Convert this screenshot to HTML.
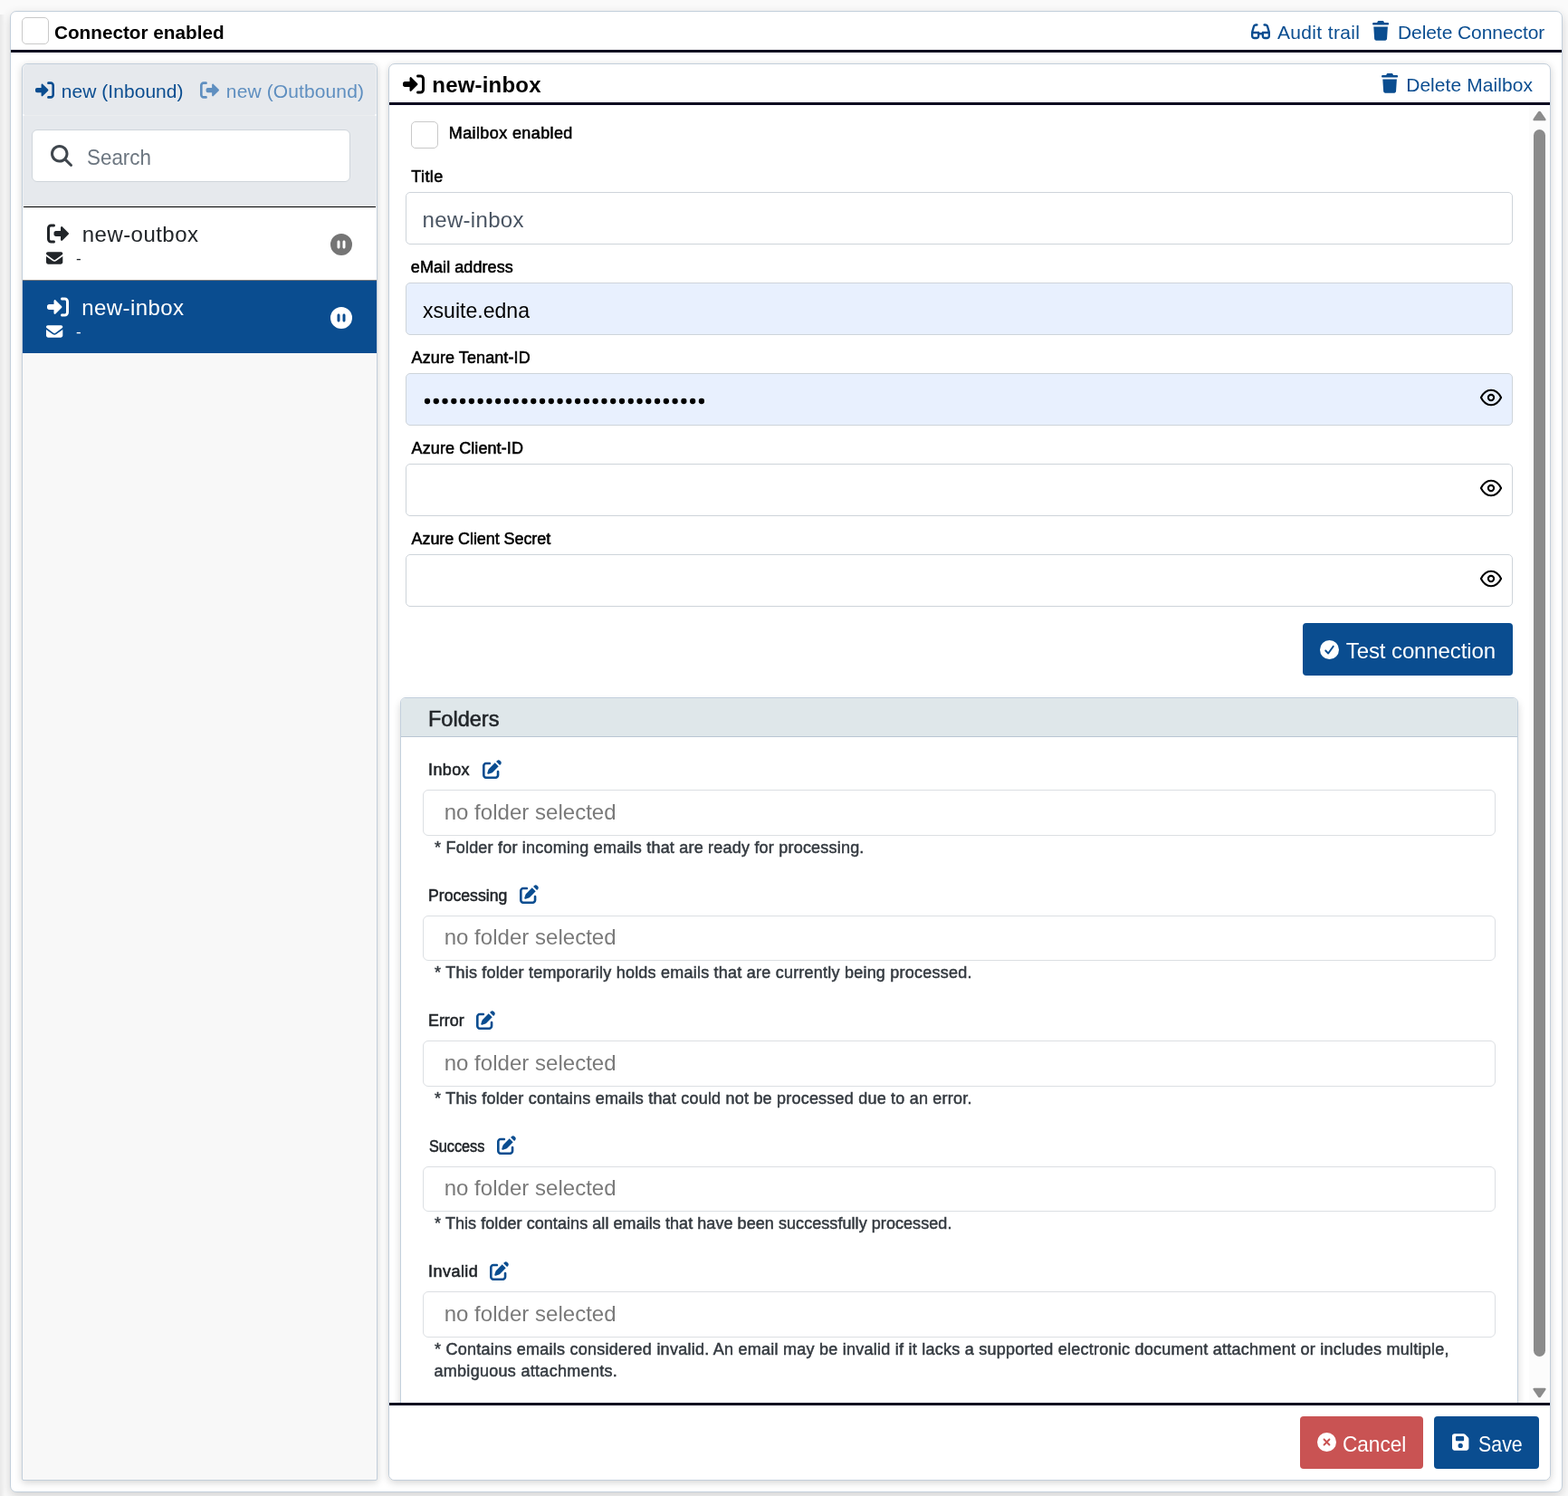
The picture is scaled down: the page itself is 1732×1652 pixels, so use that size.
<!DOCTYPE html>
<html lang="en"><head><meta charset="utf-8"><title>Connector</title>
<meta name="viewport" content="width=1732">
<style>
html,body{margin:0;padding:0}
body{width:1732px;height:1652px;overflow:hidden;background:#fafafa;position:relative;
 font-family:"Liberation Sans",Arial,sans-serif;-webkit-font-smoothing:antialiased}
#app{position:absolute;left:0;top:0;width:1732px;height:1652px;will-change:transform}
.b{position:absolute}
.i{position:absolute;display:block;overflow:visible}
.t{position:absolute;white-space:nowrap;display:block}
</style></head>
<body>
<div id="app">
<div class="b" style="left:0px;top:16px;width:6px;height:1636px;background:linear-gradient(to right, rgba(0,0,0,.07), rgba(0,0,0,0))"></div>
<div class="b" style="left:11px;top:12px;width:1715px;height:1636px;background:#fff;border:1px solid #c3cfdb;border-radius:7px;box-shadow:0 4px 12px rgba(0,0,0,.16);box-sizing:border-box"></div>
<div class="b" style="left:24px;top:19px;width:30px;height:30px;background:#fff;border:1px solid #c9c9c9;border-radius:5px;box-sizing:border-box"></div>
<span class="t" id="h_conn" style="left:59.70px;top:25px;font-size:21px;line-height:21px;color:#000;font-weight:bold;letter-spacing:0.000px;transform:scaleX(0.9861);transform-origin:0 50%;">Connector enabled</span>
<svg class="i" style="left:1382.1px;top:24.7px;" width="21" height="19.5" viewBox="0 0 576 512" preserveAspectRatio="none"><path fill="#0a4d90" d="M143.3 96c-14 0-26.5 9.2-30.6 22.6L70.4 256H224c17.7 0 32 14.3 32 32h64c0-17.7 14.3-32 32-32h153.6l-42.3-137.4c-4.1-13.4-16.5-22.6-30.6-22.6H400c-17.7 0-32-14.3-32-32s14.3-32 32-32h32.7c42.1 0 79.4 27.5 91.8 67.8l45.4 147.5c4.1 13.2 6.1 26.9 6.1 40.7v96c0 53-43 96-96 96h-64c-53 0-96-43-96-96v-32h-64v32c0 53-43 96-96 96H96c-53 0-96-43-96-96v-96c0-13.8 2.1-27.5 6.1-40.7L51.5 99.8C63.9 59.5 101.1 32 143.3 32H176c17.7 0 32 14.3 32 32s-14.3 32-32 32zM64 320v64c0 17.7 14.3 32 32 32h64c17.7 0 32-14.3 32-32v-64zm416 96c17.7 0 32-14.3 32-32v-64H384v64c0 17.7 14.3 32 32 32z"/></svg>
<span class="t" id="h_audit" style="left:1410.90px;top:25px;font-size:21px;line-height:21px;color:#0a4d90;font-weight:normal;letter-spacing:0.360px;">Audit trail</span>
<svg class="i" style="left:1516.0px;top:23.2px;" width="18.2" height="21.7" viewBox="0 -16 448 528" preserveAspectRatio="none"><path fill="#0a4d90" d="M136.7 5.9 128 32H32C14.3 32 0 46.3 0 64s14.3 32 32 32h384c17.7 0 32-14.3 32-32s-14.3-32-32-32h-96l-8.7-26.1C306.9-7.2 294.7-16 280.9-16H167.1c-13.8 0-26 8.8-30.4 21.9M416 144H32l21.1 323.1C54.7 492.4 75.7 512 101 512h246c25.3 0 46.3-19.6 47.9-44.9z"/></svg>
<span class="t" id="h_delc" style="left:1543.95px;top:25px;font-size:21px;line-height:21px;color:#0a4d90;font-weight:normal;letter-spacing:-0.067px;">Delete Connector</span>
<div class="b" style="left:12px;top:55px;width:1713px;height:3px;background:#08061f"></div>
<div class="b" style="left:24px;top:70px;width:393px;height:1565px;background:#f8f8f8;border:1px solid #c3cfdb;border-radius:6px 6px 2px 2px;box-shadow:0 2px 8px rgba(0,0,0,.18);box-sizing:border-box"></div>
<div class="b" style="left:25px;top:71px;width:391px;height:157px;background:#eef0f2;border-radius:6px 6px 0 0"></div>
<div class="b" style="left:26px;top:71px;width:389px;height:157px;background:#e6e9ed;border-radius:5px 5px 0 0"></div>
<div class="b" style="left:25px;top:127px;width:391px;height:1px;background:#ecedef"></div>
<div class="b" style="left:25px;top:126px;width:2px;height:2px;background:#fff;border-radius:0 2px 2px 0;opacity:.8"></div>
<div class="b" style="left:414px;top:126px;width:2px;height:2px;background:#fff;border-radius:2px 0 0 2px;opacity:.8"></div>
<svg class="i" style="left:39.1px;top:89px;" width="21" height="21" viewBox="0 0 512 512" preserveAspectRatio="none"><path fill="#0a4d90" d="M345 273c9.4-9.4 9.4-24.6 0-33.9L201 95c-6.9-6.9-17.2-8.9-26.2-5.2S160 102.3 160 112v80H48c-26.5 0-48 21.5-48 48v32c0 26.5 21.5 48 48 48h112v80c0 9.7 5.8 18.5 14.8 22.2s19.3 1.7 26.2-5.2zm7 143c-17.7 0-32 14.3-32 32s14.3 32 32 32h64c53 0 96-43 96-96V128c0-53-43-96-96-96h-64c-17.7 0-32 14.3-32 32s14.3 32 32 32h64c17.7 0 32 14.3 32 32v256c0 17.7-14.3 32-32 32z"/></svg>
<span class="t" id="tab_in" style="left:67.75px;top:90px;font-size:21px;line-height:21px;color:#0a4d90;font-weight:normal;letter-spacing:0.046px;">new (Inbound)</span>
<svg class="i" style="left:221px;top:89px;" width="21" height="21" viewBox="0 0 512 512" preserveAspectRatio="none"><path fill="#5f8fc0" d="M505 273c9.4-9.4 9.4-24.6 0-33.9L361 95c-6.9-6.9-17.2-8.9-26.2-5.2S320 102.3 320 112v80H208c-26.5 0-48 21.5-48 48v32c0 26.5 21.5 48 48 48h112v80c0 9.7 5.8 18.5 14.8 22.2s19.3 1.7 26.2-5.2zM160 96c17.7 0 32-14.3 32-32s-14.3-32-32-32H96C43 32 0 75 0 128v256c0 53 43 96 96 96h64c17.7 0 32-14.3 32-32s-14.3-32-32-32H96c-17.7 0-32-14.3-32-32V128c0-17.7 14.3-32 32-32z"/></svg>
<span class="t" id="tab_out" style="left:249.85px;top:90px;font-size:21px;line-height:21px;color:#5f8fc0;font-weight:normal;letter-spacing:0.115px;">new (Outbound)</span>
<div class="b" style="left:35px;top:143px;width:352px;height:58px;background:#fff;border:1px solid #cfd5db;border-radius:6px;box-sizing:border-box"></div>
<svg class="i" style="left:56px;top:160px;" width="24" height="24" viewBox="0 0 512 512" preserveAspectRatio="none"><path fill="#3f464d" d="M416 208c0 45.9-14.9 88.3-40 122.7l126.6 126.7c12.5 12.5 12.5 32.8 0 45.3s-32.8 12.5-45.3 0L330.7 376c-34.4 25.1-76.8 40-122.7 40C93.1 416 0 322.9 0 208S93.1 0 208 0s208 93.1 208 208M208 352a144 144 0 1 0 0-288 144 144 0 1 0 0 288"/></svg>
<span class="t" id="search" style="left:95.80px;top:162px;font-size:24px;line-height:24px;color:#6c7680;font-weight:normal;letter-spacing:0.000px;transform:scaleX(0.9337);transform-origin:0 50%;">Search</span>
<div class="b" style="left:26px;top:228px;width:389px;height:1px;background:#000"></div>
<div class="b" style="left:25px;top:229px;width:391px;height:80px;background:#fff"></div>
<svg class="i" style="left:52px;top:245.75px;" width="24" height="24" viewBox="0 0 512 512" preserveAspectRatio="none"><path fill="#212529" d="M505 273c9.4-9.4 9.4-24.6 0-33.9L361 95c-6.9-6.9-17.2-8.9-26.2-5.2S320 102.3 320 112v80H208c-26.5 0-48 21.5-48 48v32c0 26.5 21.5 48 48 48h112v80c0 9.7 5.8 18.5 14.8 22.2s19.3 1.7 26.2-5.2zM160 96c17.7 0 32-14.3 32-32s-14.3-32-32-32H96C43 32 0 75 0 128v256c0 53 43 96 96 96h64c17.7 0 32-14.3 32-32s-14.3-32-32-32H96c-17.7 0-32-14.3-32-32V128c0-17.7 14.3-32 32-32z"/></svg>
<span class="t" id="it1" style="left:90.80px;top:247px;font-size:24px;line-height:24px;color:#212529;font-weight:normal;letter-spacing:0.450px;">new-outbox</span>
<svg class="i" style="left:51.2px;top:276.1px;" width="18.3" height="18" viewBox="0 0 512 512" preserveAspectRatio="none"><path fill="#212529" d="M48 64C21.5 64 0 85.5 0 112c0 15.1 7.1 29.3 19.2 38.4l208 156a48 48 0 0 0 57.6 0l208-156c12.1-9.1 19.2-23.3 19.2-38.4 0-26.5-21.5-48-48-48zM0 196v188c0 35.3 28.7 64 64 64h384c35.3 0 64-28.7 64-64V196L313.6 344.8c-34.1 25.6-81.1 25.6-115.2 0z"/></svg>
<span class="t" id="it1d" style="left:83.95px;top:277px;font-size:17px;line-height:17px;color:#212529;font-weight:normal;letter-spacing:0.000px;">-</span>
<svg class="i" style="left:365px;top:258px;" width="24" height="24" viewBox="0 0 512 512" preserveAspectRatio="none"><path fill="#757575" d="M256 512a256 256 0 1 0 0-512 256 256 0 1 0 0 512m-32-320v128c0 17.7-14.3 32-32 32s-32-14.3-32-32V192c0-17.7 14.3-32 32-32s32 14.3 32 32m128 0v128c0 17.7-14.3 32-32 32s-32-14.3-32-32V192c0-17.7 14.3-32 32-32s32 14.3 32 32"/></svg>
<div class="b" style="left:25px;top:309px;width:391px;height:81px;background:#0a4d90"></div>
<div class="b" style="left:25px;top:309px;width:391px;height:1px;background:#77787a"></div>
<svg class="i" style="left:52px;top:326.85px;" width="24" height="24" viewBox="0 0 512 512" preserveAspectRatio="none"><path fill="#fff" d="M345 273c9.4-9.4 9.4-24.6 0-33.9L201 95c-6.9-6.9-17.2-8.9-26.2-5.2S160 102.3 160 112v80H48c-26.5 0-48 21.5-48 48v32c0 26.5 21.5 48 48 48h112v80c0 9.7 5.8 18.5 14.8 22.2s19.3 1.7 26.2-5.2zm7 143c-17.7 0-32 14.3-32 32s14.3 32 32 32h64c53 0 96-43 96-96V128c0-53-43-96-96-96h-64c-17.7 0-32 14.3-32 32s14.3 32 32 32h64c17.7 0 32 14.3 32 32v256c0 17.7-14.3 32-32 32z"/></svg>
<span class="t" id="it2" style="left:90.30px;top:328px;font-size:24px;line-height:24px;color:#fff;font-weight:normal;letter-spacing:0.425px;">new-inbox</span>
<svg class="i" style="left:51.2px;top:357.2px;" width="18.3" height="18" viewBox="0 0 512 512" preserveAspectRatio="none"><path fill="#fff" d="M48 64C21.5 64 0 85.5 0 112c0 15.1 7.1 29.3 19.2 38.4l208 156a48 48 0 0 0 57.6 0l208-156c12.1-9.1 19.2-23.3 19.2-38.4 0-26.5-21.5-48-48-48zM0 196v188c0 35.3 28.7 64 64 64h384c35.3 0 64-28.7 64-64V196L313.6 344.8c-34.1 25.6-81.1 25.6-115.2 0z"/></svg>
<span class="t" id="it2d" style="left:83.95px;top:358px;font-size:17px;line-height:17px;color:#fff;font-weight:normal;letter-spacing:0.000px;">-</span>
<svg class="i" style="left:365px;top:338.8px;" width="24" height="24" viewBox="0 0 512 512" preserveAspectRatio="none"><path fill="#fff" d="M256 512a256 256 0 1 0 0-512 256 256 0 1 0 0 512m-32-320v128c0 17.7-14.3 32-32 32s-32-14.3-32-32V192c0-17.7 14.3-32 32-32s32 14.3 32 32m128 0v128c0 17.7-14.3 32-32 32s-32-14.3-32-32V192c0-17.7 14.3-32 32-32s32 14.3 32 32"/></svg>
<div class="b" style="left:429px;top:70px;width:1284px;height:1565px;background:#fff;border:1px solid #c3cfdb;border-radius:7px;box-shadow:0 2px 8px rgba(0,0,0,.18);box-sizing:border-box"></div>
<svg class="i" style="left:445px;top:81px;" width="24" height="24" viewBox="0 0 512 512" preserveAspectRatio="none"><path fill="#000" d="M345 273c9.4-9.4 9.4-24.6 0-33.9L201 95c-6.9-6.9-17.2-8.9-26.2-5.2S160 102.3 160 112v80H48c-26.5 0-48 21.5-48 48v32c0 26.5 21.5 48 48 48h112v80c0 9.7 5.8 18.5 14.8 22.2s19.3 1.7 26.2-5.2zm7 143c-17.7 0-32 14.3-32 32s14.3 32 32 32h64c53 0 96-43 96-96V128c0-53-43-96-96-96h-64c-17.7 0-32 14.3-32 32s14.3 32 32 32h64c17.7 0 32 14.3 32 32v256c0 17.7-14.3 32-32 32z"/></svg>
<span class="t" id="rh" style="left:477.35px;top:82px;font-size:24px;line-height:24px;color:#000;font-weight:bold;letter-spacing:0.188px;">new-inbox</span>
<svg class="i" style="left:1525.9px;top:81.1px;" width="18.2" height="21.7" viewBox="0 -16 448 528" preserveAspectRatio="none"><path fill="#0a4d90" d="M136.7 5.9 128 32H32C14.3 32 0 46.3 0 64s14.3 32 32 32h384c17.7 0 32-14.3 32-32s-14.3-32-32-32h-96l-8.7-26.1C306.9-7.2 294.7-16 280.9-16H167.1c-13.8 0-26 8.8-30.4 21.9M416 144H32l21.1 323.1C54.7 492.4 75.7 512 101 512h246c25.3 0 46.3-19.6 47.9-44.9z"/></svg>
<span class="t" id="rh_del" style="left:1553.15px;top:83px;font-size:21px;line-height:21px;color:#0a4d90;font-weight:normal;letter-spacing:0.069px;">Delete Mailbox</span>
<div class="b" style="left:430px;top:113px;width:1282px;height:3px;background:#08061f"></div>
<div class="b" style="left:1689px;top:116px;width:23px;height:1433px;background:#fcfcfc"></div>
<svg class="i" style="left:1693px;top:122px" width="15" height="12" viewBox="0 0 15 12"><path d="M7.5 0.7 Q8.4 0.7 9 1.6 L14.3 9.2 Q15.2 11.2 13.2 11.3 L1.8 11.3 Q-0.2 11.2 0.7 9.2 L6 1.6 Q6.6 0.7 7.5 0.7 Z" fill="#8b8b8b"/></svg>
<div class="b" style="left:1694px;top:143px;width:13px;height:1355px;background:#8b8b8b;border-radius:7px"></div>
<svg class="i" style="left:1693px;top:1532px" width="15" height="12" viewBox="0 0 15 12"><path d="M7.5 11.3 Q8.4 11.3 9 10.4 L14.3 2.8 Q15.2 0.8 13.2 0.7 L1.8 0.7 Q-0.2 0.8 0.7 2.8 L6 10.4 Q6.6 11.3 7.5 11.3 Z" fill="#8b8b8b"/></svg>
<div class="b" style="left:454px;top:134px;width:30px;height:30px;background:#fff;border:1px solid #c9c9c9;border-radius:5px;box-sizing:border-box"></div>
<span class="t" id="mb_en" style="left:495.75px;top:138px;font-size:18px;line-height:18px;color:#000;font-weight:normal;letter-spacing:0.393px;-webkit-text-stroke:0.55px currentColor">Mailbox enabled</span>
<span class="t" id="lab0" style="left:454.30px;top:186px;font-size:18px;line-height:18px;color:#000;font-weight:normal;letter-spacing:0.387px;-webkit-text-stroke:0.55px currentColor">Title</span>
<div class="b" style="left:448px;top:212px;width:1223px;height:58px;background:#fff;border:1px solid #ced4da;border-radius:5px;box-sizing:border-box"></div>
<span class="t" id="lab1" style="left:453.85px;top:286px;font-size:18px;line-height:18px;color:#000;font-weight:normal;letter-spacing:0.071px;-webkit-text-stroke:0.55px currentColor">eMail address</span>
<div class="b" style="left:448px;top:312px;width:1223px;height:58px;background:#e8f0fe;border:1px solid #ced4da;border-radius:5px;box-sizing:border-box"></div>
<span class="t" id="lab2" style="left:454.60px;top:386px;font-size:18px;line-height:18px;color:#000;font-weight:normal;letter-spacing:0.093px;-webkit-text-stroke:0.55px currentColor">Azure Tenant-ID</span>
<div class="b" style="left:448px;top:412px;width:1223px;height:58px;background:#e8f0fe;border:1px solid #ced4da;border-radius:5px;box-sizing:border-box"></div>
<svg class="i" style="left:1634.05px;top:428.9px" width="26" height="20" viewBox="0 0 26 20"><path d="M1.9 10 C4.6 4.6 8.4 1.8 13 1.8 S21.4 4.6 24.1 10 C21.4 15.4 17.6 18.2 13 18.2 S4.6 15.4 1.9 10 Z" fill="none" stroke="#000" stroke-width="2.05" stroke-linejoin="round"/><circle cx="13" cy="10" r="3.15" fill="none" stroke="#000" stroke-width="2.05"/></svg>
<span class="t" id="lab3" style="left:454.60px;top:486px;font-size:18px;line-height:18px;color:#000;font-weight:normal;letter-spacing:0.089px;-webkit-text-stroke:0.55px currentColor">Azure Client-ID</span>
<div class="b" style="left:448px;top:512px;width:1223px;height:58px;background:#fff;border:1px solid #ced4da;border-radius:5px;box-sizing:border-box"></div>
<svg class="i" style="left:1634.05px;top:528.9px" width="26" height="20" viewBox="0 0 26 20"><path d="M1.9 10 C4.6 4.6 8.4 1.8 13 1.8 S21.4 4.6 24.1 10 C21.4 15.4 17.6 18.2 13 18.2 S4.6 15.4 1.9 10 Z" fill="none" stroke="#000" stroke-width="2.05" stroke-linejoin="round"/><circle cx="13" cy="10" r="3.15" fill="none" stroke="#000" stroke-width="2.05"/></svg>
<span class="t" id="lab4" style="left:454.60px;top:586px;font-size:18px;line-height:18px;color:#000;font-weight:normal;letter-spacing:-0.083px;-webkit-text-stroke:0.55px currentColor">Azure Client Secret</span>
<div class="b" style="left:448px;top:612px;width:1223px;height:58px;background:#fff;border:1px solid #ced4da;border-radius:5px;box-sizing:border-box"></div>
<svg class="i" style="left:1634.05px;top:628.9px" width="26" height="20" viewBox="0 0 26 20"><path d="M1.9 10 C4.6 4.6 8.4 1.8 13 1.8 S21.4 4.6 24.1 10 C21.4 15.4 17.6 18.2 13 18.2 S4.6 15.4 1.9 10 Z" fill="none" stroke="#000" stroke-width="2.05" stroke-linejoin="round"/><circle cx="13" cy="10" r="3.15" fill="none" stroke="#000" stroke-width="2.05"/></svg>
<span class="t" id="v_title" style="left:466.60px;top:231px;font-size:24px;line-height:24px;color:#4a5563;font-weight:normal;letter-spacing:0.312px;">new-inbox</span>
<span class="t" id="v_mail" style="left:467.05px;top:331px;font-size:24px;line-height:24px;color:#000;font-weight:normal;letter-spacing:0.000px;transform:scaleX(0.9612);transform-origin:0 50%;">xsuite.edna</span>
<svg class="i" style="left:467.8px;top:438.75px" width="320" height="8" viewBox="0 0 320 8" fill="#000"><circle cx="4.00" cy="4" r="3.15"/><circle cx="13.77" cy="4" r="3.15"/><circle cx="23.54" cy="4" r="3.15"/><circle cx="33.32" cy="4" r="3.15"/><circle cx="43.09" cy="4" r="3.15"/><circle cx="52.86" cy="4" r="3.15"/><circle cx="62.63" cy="4" r="3.15"/><circle cx="72.40" cy="4" r="3.15"/><circle cx="82.18" cy="4" r="3.15"/><circle cx="91.95" cy="4" r="3.15"/><circle cx="101.72" cy="4" r="3.15"/><circle cx="111.49" cy="4" r="3.15"/><circle cx="121.26" cy="4" r="3.15"/><circle cx="131.04" cy="4" r="3.15"/><circle cx="140.81" cy="4" r="3.15"/><circle cx="150.58" cy="4" r="3.15"/><circle cx="160.35" cy="4" r="3.15"/><circle cx="170.12" cy="4" r="3.15"/><circle cx="179.90" cy="4" r="3.15"/><circle cx="189.67" cy="4" r="3.15"/><circle cx="199.44" cy="4" r="3.15"/><circle cx="209.21" cy="4" r="3.15"/><circle cx="218.98" cy="4" r="3.15"/><circle cx="228.76" cy="4" r="3.15"/><circle cx="238.53" cy="4" r="3.15"/><circle cx="248.30" cy="4" r="3.15"/><circle cx="258.07" cy="4" r="3.15"/><circle cx="267.84" cy="4" r="3.15"/><circle cx="277.62" cy="4" r="3.15"/><circle cx="287.39" cy="4" r="3.15"/><circle cx="297.16" cy="4" r="3.15"/><circle cx="306.93" cy="4" r="3.15"/></svg>
<div class="b" style="left:1439px;top:688px;width:232px;height:58px;background:#0a4d90;border-radius:4px"></div>
<svg class="i" style="left:1458px;top:707px;" width="21" height="21" viewBox="0 0 512 512" preserveAspectRatio="none"><path fill="#fff" d="M256 512a256 256 0 1 1 0-512 256 256 0 1 1 0 512m118-366.3c-10.7-7.8-25.7-5.4-33.5 5.3L221.1 315.2 169 263.1c-9.4-9.4-24.6-9.4-33.9 0s-9.4 24.6 0 33.9l72 72c5 5 11.8 7.5 18.8 7s13.4-4.1 17.5-9.8l135.9-187c7.8-10.7 5.4-25.7-5.3-33.5"/></svg>
<span class="t" id="btn_test" style="left:1486.85px;top:707px;font-size:24px;line-height:24px;color:#fff;font-weight:normal;letter-spacing:-0.108px;">Test connection</span>
<div class="b" style="left:442px;top:770px;width:1235px;height:790px;background:#fff;border:1px solid #c3d0dd;border-radius:6px 6px 0 0;box-shadow:0 5px 8px rgba(0,0,0,.16);box-sizing:border-box"></div>
<div class="b" style="left:443px;top:771px;width:1233px;height:42px;background:#dfe7ea;border-radius:5px 5px 0 0;border-bottom:1px solid #b9c6d3"></div>
<span class="t" id="folders" style="left:473.25px;top:782px;font-size:24px;line-height:24px;color:#212529;font-weight:normal;letter-spacing:0.000px;transform:scaleX(0.9800);transform-origin:0 50%;-webkit-text-stroke:0.55px currentColor">Folders</span>
<span class="t" id="fl0" style="left:473.05px;top:841px;font-size:18px;line-height:18px;color:#212529;font-weight:normal;letter-spacing:0.375px;-webkit-text-stroke:0.55px currentColor">Inbox</span>
<svg class="i" style="left:533px;top:839px;" width="21" height="21" viewBox="0 0 512 512" preserveAspectRatio="none"><path fill="#0a4d90" d="M471.6 21.7c-21.9-21.9-57.3-21.9-79.2 0L368 46.1l97.9 97.9 24.4-24.4c21.9-21.9 21.9-57.3 0-79.2zm-299.2 220c-6.1 6.1-10.8 13.6-13.5 21.9l-29.6 88.8c-2.9 8.6-.6 18.1 5.8 24.6s15.9 8.7 24.6 5.8l88.8-29.6c8.2-2.7 15.7-7.4 21.9-13.5L432 177.9 334.1 80zM96 64c-53 0-96 43-96 96v256c0 53 43 96 96 96h256c53 0 96-43 96-96v-96c0-17.7-14.3-32-32-32s-32 14.3-32 32v96c0 17.7-14.3 32-32 32H96c-17.7 0-32-14.3-32-32V160c0-17.7 14.3-32 32-32h96c17.7 0 32-14.3 32-32s-14.3-32-32-32z"/></svg>
<div class="b" style="left:467px;top:872px;width:1185px;height:51px;background:#fff;border:1px solid #dcdfe3;border-radius:6px;box-sizing:border-box"></div>
<span class="t" id="fv0" style="left:490.65px;top:885px;font-size:24px;line-height:24px;color:#7a7a7a;font-weight:normal;letter-spacing:0.029px;">no folder selected</span>
<span class="t" id="fh0" style="left:480.10px;top:927px;font-size:18px;line-height:18px;color:#343a40;font-weight:normal;letter-spacing:0.208px;-webkit-text-stroke:0.5px currentColor">* Folder for incoming emails that are ready for processing.</span>
<span class="t" id="fl1" style="left:473.30px;top:980px;font-size:18px;line-height:18px;color:#212529;font-weight:normal;letter-spacing:0.000px;transform:scaleX(0.9800);transform-origin:0 50%;-webkit-text-stroke:0.55px currentColor">Processing</span>
<svg class="i" style="left:574px;top:977px;" width="21" height="21" viewBox="0 0 512 512" preserveAspectRatio="none"><path fill="#0a4d90" d="M471.6 21.7c-21.9-21.9-57.3-21.9-79.2 0L368 46.1l97.9 97.9 24.4-24.4c21.9-21.9 21.9-57.3 0-79.2zm-299.2 220c-6.1 6.1-10.8 13.6-13.5 21.9l-29.6 88.8c-2.9 8.6-.6 18.1 5.8 24.6s15.9 8.7 24.6 5.8l88.8-29.6c8.2-2.7 15.7-7.4 21.9-13.5L432 177.9 334.1 80zM96 64c-53 0-96 43-96 96v256c0 53 43 96 96 96h256c53 0 96-43 96-96v-96c0-17.7-14.3-32-32-32s-32 14.3-32 32v96c0 17.7-14.3 32-32 32H96c-17.7 0-32-14.3-32-32V160c0-17.7 14.3-32 32-32h96c17.7 0 32-14.3 32-32s-14.3-32-32-32z"/></svg>
<div class="b" style="left:467px;top:1011px;width:1185px;height:50px;background:#fff;border:1px solid #dcdfe3;border-radius:6px;box-sizing:border-box"></div>
<span class="t" id="fv1" style="left:490.65px;top:1023px;font-size:24px;line-height:24px;color:#7a7a7a;font-weight:normal;letter-spacing:0.029px;">no folder selected</span>
<span class="t" id="fh1" style="left:480.10px;top:1065px;font-size:18px;line-height:18px;color:#343a40;font-weight:normal;letter-spacing:0.224px;-webkit-text-stroke:0.5px currentColor">* This folder temporarily holds emails that are currently being processed.</span>
<span class="t" id="fl2" style="left:473.30px;top:1118px;font-size:18px;line-height:18px;color:#212529;font-weight:normal;letter-spacing:0.000px;transform:scaleX(0.9929);transform-origin:0 50%;-webkit-text-stroke:0.55px currentColor">Error</span>
<svg class="i" style="left:526px;top:1116px;" width="21" height="21" viewBox="0 0 512 512" preserveAspectRatio="none"><path fill="#0a4d90" d="M471.6 21.7c-21.9-21.9-57.3-21.9-79.2 0L368 46.1l97.9 97.9 24.4-24.4c21.9-21.9 21.9-57.3 0-79.2zm-299.2 220c-6.1 6.1-10.8 13.6-13.5 21.9l-29.6 88.8c-2.9 8.6-.6 18.1 5.8 24.6s15.9 8.7 24.6 5.8l88.8-29.6c8.2-2.7 15.7-7.4 21.9-13.5L432 177.9 334.1 80zM96 64c-53 0-96 43-96 96v256c0 53 43 96 96 96h256c53 0 96-43 96-96v-96c0-17.7-14.3-32-32-32s-32 14.3-32 32v96c0 17.7-14.3 32-32 32H96c-17.7 0-32-14.3-32-32V160c0-17.7 14.3-32 32-32h96c17.7 0 32-14.3 32-32s-14.3-32-32-32z"/></svg>
<div class="b" style="left:467px;top:1149px;width:1185px;height:51px;background:#fff;border:1px solid #dcdfe3;border-radius:6px;box-sizing:border-box"></div>
<span class="t" id="fv2" style="left:490.65px;top:1162px;font-size:24px;line-height:24px;color:#7a7a7a;font-weight:normal;letter-spacing:0.029px;">no folder selected</span>
<span class="t" id="fh2" style="left:480.10px;top:1204px;font-size:18px;line-height:18px;color:#343a40;font-weight:normal;letter-spacing:0.210px;-webkit-text-stroke:0.5px currentColor">* This folder contains emails that could not be processed due to an error.</span>
<span class="t" id="fl3" style="left:474.05px;top:1257px;font-size:18px;line-height:18px;color:#212529;font-weight:normal;letter-spacing:0.000px;transform:scaleX(0.9017);transform-origin:0 50%;-webkit-text-stroke:0.55px currentColor">Success</span>
<svg class="i" style="left:549px;top:1254px;" width="21" height="21" viewBox="0 0 512 512" preserveAspectRatio="none"><path fill="#0a4d90" d="M471.6 21.7c-21.9-21.9-57.3-21.9-79.2 0L368 46.1l97.9 97.9 24.4-24.4c21.9-21.9 21.9-57.3 0-79.2zm-299.2 220c-6.1 6.1-10.8 13.6-13.5 21.9l-29.6 88.8c-2.9 8.6-.6 18.1 5.8 24.6s15.9 8.7 24.6 5.8l88.8-29.6c8.2-2.7 15.7-7.4 21.9-13.5L432 177.9 334.1 80zM96 64c-53 0-96 43-96 96v256c0 53 43 96 96 96h256c53 0 96-43 96-96v-96c0-17.7-14.3-32-32-32s-32 14.3-32 32v96c0 17.7-14.3 32-32 32H96c-17.7 0-32-14.3-32-32V160c0-17.7 14.3-32 32-32h96c17.7 0 32-14.3 32-32s-14.3-32-32-32z"/></svg>
<div class="b" style="left:467px;top:1288px;width:1185px;height:50px;background:#fff;border:1px solid #dcdfe3;border-radius:6px;box-sizing:border-box"></div>
<span class="t" id="fv3" style="left:490.65px;top:1300px;font-size:24px;line-height:24px;color:#7a7a7a;font-weight:normal;letter-spacing:0.029px;">no folder selected</span>
<span class="t" id="fh3" style="left:480.10px;top:1342px;font-size:18px;line-height:18px;color:#343a40;font-weight:normal;letter-spacing:0.061px;-webkit-text-stroke:0.5px currentColor">* This folder contains all emails that have been successfully processed.</span>
<span class="t" id="fl4" style="left:473.05px;top:1395px;font-size:18px;line-height:18px;color:#212529;font-weight:normal;letter-spacing:0.458px;-webkit-text-stroke:0.55px currentColor">Invalid</span>
<svg class="i" style="left:541px;top:1393px;" width="21" height="21" viewBox="0 0 512 512" preserveAspectRatio="none"><path fill="#0a4d90" d="M471.6 21.7c-21.9-21.9-57.3-21.9-79.2 0L368 46.1l97.9 97.9 24.4-24.4c21.9-21.9 21.9-57.3 0-79.2zm-299.2 220c-6.1 6.1-10.8 13.6-13.5 21.9l-29.6 88.8c-2.9 8.6-.6 18.1 5.8 24.6s15.9 8.7 24.6 5.8l88.8-29.6c8.2-2.7 15.7-7.4 21.9-13.5L432 177.9 334.1 80zM96 64c-53 0-96 43-96 96v256c0 53 43 96 96 96h256c53 0 96-43 96-96v-96c0-17.7-14.3-32-32-32s-32 14.3-32 32v96c0 17.7-14.3 32-32 32H96c-17.7 0-32-14.3-32-32V160c0-17.7 14.3-32 32-32h96c17.7 0 32-14.3 32-32s-14.3-32-32-32z"/></svg>
<div class="b" style="left:467px;top:1426px;width:1185px;height:51px;background:#fff;border:1px solid #dcdfe3;border-radius:6px;box-sizing:border-box"></div>
<span class="t" id="fv4" style="left:490.65px;top:1439px;font-size:24px;line-height:24px;color:#7a7a7a;font-weight:normal;letter-spacing:0.029px;">no folder selected</span>
<span class="t" id="fh4" style="left:480.10px;top:1481px;font-size:18px;line-height:18px;color:#343a40;font-weight:normal;letter-spacing:0.247px;-webkit-text-stroke:0.5px currentColor">* Contains emails considered invalid. An email may be invalid if it lacks a supported electronic document attachment or includes multiple,</span>
<span class="t" id="fh4b" style="left:479.45px;top:1505px;font-size:18px;line-height:18px;color:#343a40;font-weight:normal;letter-spacing:0.297px;-webkit-text-stroke:0.5px currentColor">ambiguous attachments.</span>
<div class="b" style="left:430px;top:1549px;width:1282px;height:85px;background:#fff;border-radius:0 0 6px 6px"></div>
<div class="b" style="left:430px;top:1549px;width:1282px;height:3px;background:#08061f"></div>
<div class="b" style="left:1436px;top:1564px;width:136px;height:58px;background:#c95353;border-radius:4px"></div>
<svg class="i" style="left:1455px;top:1582px;" width="21" height="21" viewBox="0 0 512 512" preserveAspectRatio="none"><path fill="#fff" d="M256 512a256 256 0 1 0 0-512 256 256 0 1 0 0 512m-89-345c9.4-9.4 24.6-9.4 33.9 0l55 55 55-55c9.4-9.4 24.6-9.4 33.9 0s9.4 24.6 0 33.9l-55 55 55 55c9.4 9.4 9.4 24.6 0 33.9s-24.6 9.4-33.9 0l-55-55-55 55c-9.4 9.4-24.6 9.4-33.9 0s-9.4-24.6 0-33.9l55-55-55-55c-9.4-9.4-9.4-24.6 0-33.9"/></svg>
<span class="t" id="btn_cancel" style="left:1483.25px;top:1583px;font-size:24px;line-height:24px;color:#fff;font-weight:normal;letter-spacing:0.000px;transform:scaleX(0.9404);transform-origin:0 50%;">Cancel</span>
<div class="b" style="left:1584px;top:1564px;width:116px;height:58px;background:#0a4d90;border-radius:4px"></div>
<svg class="i" style="left:1604.3px;top:1581.8px;" width="18.4" height="21" viewBox="0 0 448 512" preserveAspectRatio="none"><path fill="#fff" d="M64 32C28.7 32 0 60.7 0 96v320c0 35.3 28.7 64 64 64h320c35.3 0 64-28.7 64-64V173.3c0-17-6.7-33.3-18.7-45.3L352 50.7c-12-12-28.3-18.7-45.3-18.7zm32 96c0-17.7 14.3-32 32-32h160c17.7 0 32 14.3 32 32v64c0 17.7-14.3 32-32 32H128c-17.7 0-32-14.3-32-32zm128 160a64 64 0 1 1 0 128 64 64 0 1 1 0-128"/></svg>
<span class="t" id="btn_save" style="left:1633.25px;top:1583px;font-size:24px;line-height:24px;color:#fff;font-weight:normal;letter-spacing:0.000px;transform:scaleX(0.8906);transform-origin:0 50%;">Save</span>
</div>
</body></html>
